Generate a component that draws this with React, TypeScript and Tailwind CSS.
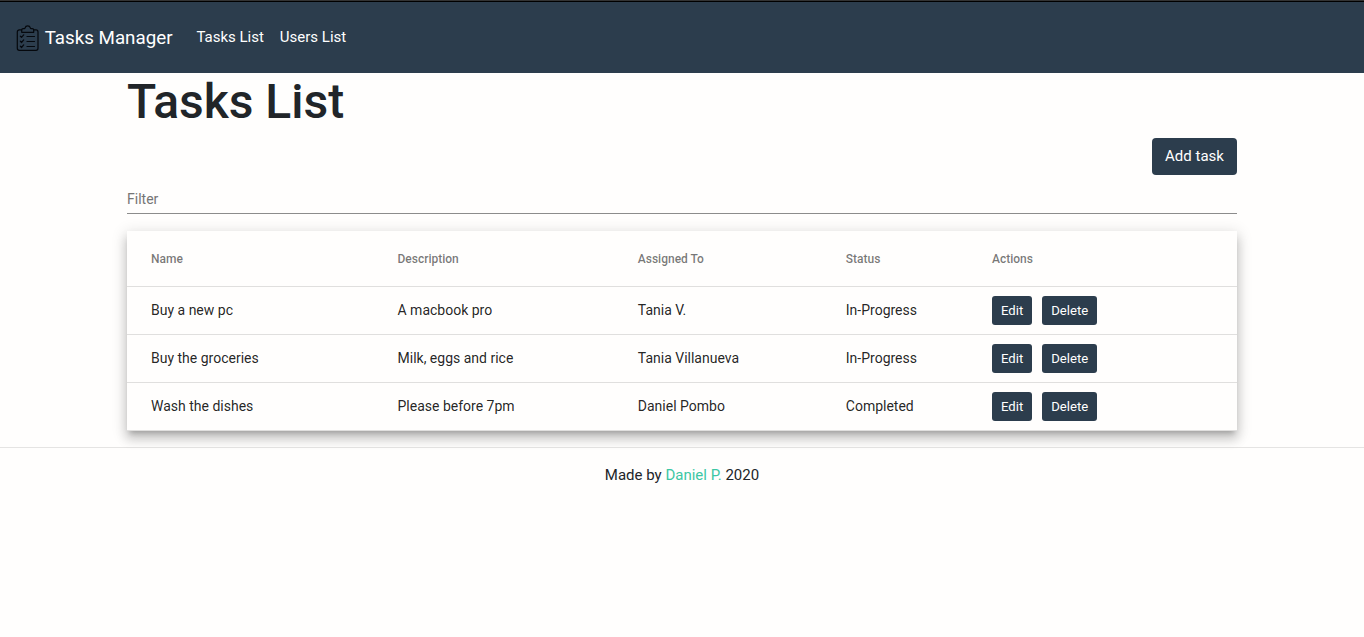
const tasks = [
  { name: 'Buy a new pc', description: 'A macbook pro', assignedTo: 'Tania V.', status: 'In-Progress' },
  { name: 'Buy the groceries', description: 'Milk, eggs and rice', assignedTo: 'Tania Villanueva', status: 'In-Progress' },
  { name: 'Wash the dishes', description: 'Please before 7pm', assignedTo: 'Daniel Pombo', status: 'Completed' },
];

const columns = ['Name', 'Description', 'Assigned To', 'Status', 'Actions'];

function ClipboardIcon() {
  return (
    <svg
      viewBox="0 0 23 26"
      className="h-[26px] w-[23px] shrink-0"
      fill="none"
      stroke="#05080d"
      strokeWidth="1.2"
      strokeLinecap="round"
      strokeLinejoin="round"
    >
      <path d="M5.6 4.9H3.3A2 2 0 0 0 1.3 6.9v16.4a2 2 0 0 0 2 2h16.7a2 2 0 0 0 2-2V6.9a2 2 0 0 0-2-2h-2.3" />
      <path d="M5.7 7.3V5.1c0-.9.6-1.4 1.4-1.4h1c.6 0 .9-.3 1-.8C9.4 1.6 10.4.9 11.7.9s2.3.7 2.6 2c.1.5.4.8 1 .8h1c.8 0 1.4.5 1.4 1.4v2.2z" />
      <path d="m4.3 11.1 1.2 1.3 2.2-2.6M4.3 16.2l1.2 1.3 2.2-2.6M4.3 21.2l1.2 1.3 2.2-2.6" />
      <path d="M11 11.5h7.5M11 16.5h7.5M11 21.5h7.5" />
    </svg>
  );
}

function SmallButton({ label }: { label: string }) {
  return (
    <button className="h-[29px] rounded-[3px] bg-[#2c3d4d] px-[9px] text-[13.125px] leading-[29px] text-white">
      {label}
    </button>
  );
}

export default function App() {
  return (
    <div className="min-h-screen bg-[#fffefd] font-[Roboto,sans-serif] text-[15px] leading-[22.5px] text-[#212529]">
      <header className="h-[73px] border-t border-[#333] bg-[#2c3d4d]">
        <nav className="flex h-[72px] items-center border-t border-black px-4 text-white">
          <a href="#" className="flex items-center gap-[5.7px] text-[18.75px] leading-7">
            <ClipboardIcon />
            <span>Tasks Manager</span>
          </a>
          <div className="ml-[23.9px] flex gap-4">
            <a href="#">Tasks List</a>
            <a href="#">Users List</a>
          </div>
        </nav>
      </header>

      <main className="mx-auto w-[1110px]">
        <h1 className="h-[65px] text-[48px] leading-[57.6px] font-medium">Tasks List</h1>
        <div className="flex justify-end">
          <button className="h-[37px] w-[85px] rounded bg-[#2c3d4d] text-[15px] text-white">Add task</button>
        </div>
        <input
          aria-label="Filter"
          placeholder="Filter"
          className="mt-[9px] block h-[30px] w-full border-b border-[#8c8c8c] bg-transparent text-[14px] outline-none placeholder:text-[#757575]"
        />
        <table className="mt-[17px] w-full table-fixed border-separate border-spacing-0 bg-[#fffefd] text-[14px] text-black/87 shadow-[0_5px_5px_-3px_rgba(0,0,0,.2),0_8px_10px_1px_rgba(0,0,0,.14),0_3px_14px_2px_rgba(0,0,0,.12)]">
          <colgroup>
            <col className="w-[270.5px]" />
            <col className="w-[240.3px]" />
            <col className="w-[208px]" />
            <col className="w-[146.2px]" />
            <col className="w-[245px]" />
          </colgroup>
          <thead>
            <tr className="h-14 text-left text-[12px] text-black/54">
              {columns.map((column) => (
                <th key={column} className="border-b border-black/12 p-0 pt-px font-medium first:pl-6">{column}</th>
              ))}
            </tr>
          </thead>
          <tbody>
            {tasks.map((task) => (
              <tr key={task.name} className="h-12">
                <td className="border-b border-black/12 p-0 pl-6">{task.name}</td>
                <td className="border-b border-black/12 p-0">{task.description}</td>
                <td className="border-b border-black/12 p-0">{task.assignedTo}</td>
                <td className="border-b border-black/12 p-0">{task.status}</td>
                <td className="border-b border-black/12 p-0">
                  <div className="flex gap-[10px]">
                    <SmallButton label="Edit" />
                    <SmallButton label="Delete" />
                  </div>
                </td>
              </tr>
            ))}
          </tbody>
        </table>
      </main>

      <footer className="mt-4 border-t border-black/10 pt-4 text-center">
        Made by <a href="#" className="text-[#3cc7a4]">Daniel P.</a> 2020
      </footer>
    </div>
  );
}
